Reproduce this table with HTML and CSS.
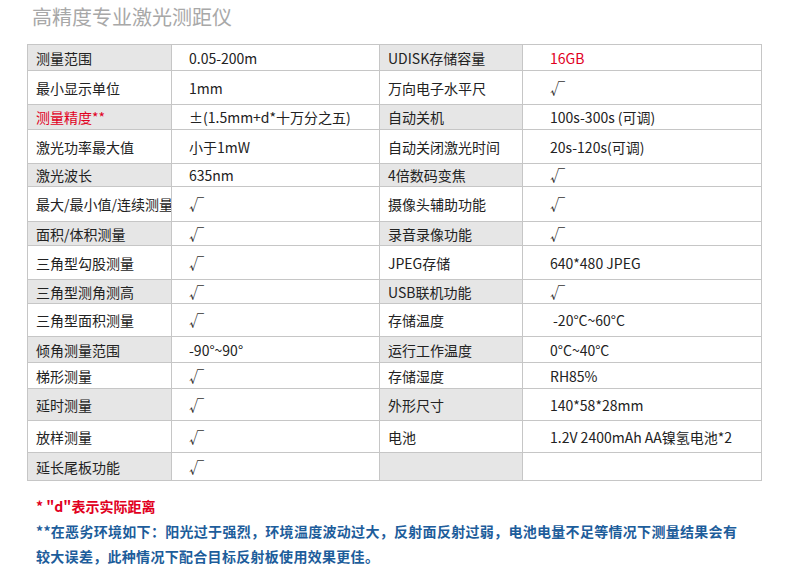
FILE: index.html
```html
<!DOCTYPE html>
<html lang="zh-CN">
<head>
<meta charset="utf-8">
<title>高精度专业激光测距仪</title>
<link rel="stylesheet" href="styles.css">
</head>
<body>
<h1 class="title">高精度专业激光测距仪</h1>
<div class="spec">
  <div class="c k g">测量范围</div><div class="c v">0.05-200m</div><div class="c k2 g">UDISK存储容量</div><div class="c v2 red">16GB</div>
  <div class="c k">最小显示单位</div><div class="c v">1mm</div><div class="c k2">万向电子水平尺</div><div class="c v2"><span class="ok">√</span></div>
  <div class="c k g red">测量精度**</div><div class="c v">±(1.5mm+d*十万分之五)</div><div class="c k2 g">自动关机</div><div class="c v2">100s-300s (可调)</div>
  <div class="c k">激光功率最大值</div><div class="c v">小于1mW</div><div class="c k2">自动关闭激光时间</div><div class="c v2">20s-120s(可调)</div>
  <div class="c k g">激光波长</div><div class="c v">635nm</div><div class="c k2 g">4倍数码变焦</div><div class="c v2"><span class="ok">√</span></div>
  <div class="c k">最大/最小值/连续测量</div><div class="c v"><span class="ok">√</span></div><div class="c k2">摄像头辅助功能</div><div class="c v2"><span class="ok">√</span></div>
  <div class="c k g">面积/体积测量</div><div class="c v"><span class="ok">√</span></div><div class="c k2 g">录音录像功能</div><div class="c v2"><span class="ok">√</span></div>
  <div class="c k">三角型勾股测量</div><div class="c v"><span class="ok">√</span></div><div class="c k2">JPEG存储</div><div class="c v2">640*480 JPEG</div>
  <div class="c k g">三角型测角测高</div><div class="c v"><span class="ok">√</span></div><div class="c k2 g">USB联机功能</div><div class="c v2"><span class="ok">√</span></div>
  <div class="c k">三角型面积测量</div><div class="c v"><span class="ok">√</span></div><div class="c k2">存储温度</div><div class="c v2 ind">-20°C~60°C</div>
  <div class="c k g">倾角测量范围</div><div class="c v">-90°~90°</div><div class="c k2 g">运行工作温度</div><div class="c v2">0°C~40°C</div>
  <div class="c k">梯形测量</div><div class="c v"><span class="ok">√</span></div><div class="c k2">存储湿度</div><div class="c v2">RH85%</div>
  <div class="c k g">延时测量</div><div class="c v"><span class="ok">√</span></div><div class="c k2 g">外形尺寸</div><div class="c v2">140*58*28mm</div>
  <div class="c k">放样测量</div><div class="c v"><span class="ok">√</span></div><div class="c k2">电池</div><div class="c v2">1.2V 2400mAh AA镍氢电池*2</div>
  <div class="c k g">延长尾板功能</div><div class="c v"><span class="ok">√</span></div><div class="c k2 g"></div><div class="c v2"></div>
</div>
<div class="notes">
  <p class="note-red">* "d"表示实际距离</p>
  <p class="note-blue">**在恶劣环境如下：阳光过于强烈，环境温度波动过大，反射面反射过弱，电池电量不足等情况下测量结果会有较大误差，此种情况下配合目标反射板使用效果更佳。</p>
</div>
</body>
</html>
```
FILE: styles.css
```css
html, body {
  margin: 0;
  padding: 0;
  background: #ffffff;
}
body {
  width: 790px;
  height: 575px;
  overflow: hidden;
  font-family: "Noto Sans CJK SC", "Noto Sans", sans-serif;
  color: #222222;
}
.title {
  margin: 0;
  padding: 5px 0 0 32px;
  height: 44px;
  box-sizing: border-box;
  font-size: 20px;
  line-height: 24px;
  font-weight: 400;
  color: #a8a8a8;
}
.spec {
  margin-left: 27px;
  width: 735px;
  box-sizing: border-box;
  display: grid;
  grid-template-columns: 143px 207px 142px 238px;
  grid-template-rows: 25px 33px 24px 33px 22px 34px 23px 33px 23px 32px 25px 25px 31px 31px 27px;
  gap: 1px;
  background: #c6c6c6;
  border: 1px solid #c6c6c6;
}
.c {
  background: #ffffff;
  display: flex;
  align-items: center;
  font-size: 14px;
  line-height: 16px;
  white-space: nowrap;
  overflow: hidden;
}
.c.g {
  background: #e6e6e6;
}
.k { padding-left: 8px; }
.v { padding-left: 17px; }
.k2 { padding-left: 8px; }
.v2 { padding-left: 27px; }
.v2.ind { padding-left: 30px; }
.red { color: #e1001e; }
.ok {
  font-size: 15px;
  color: #333333;
}
.notes {
  padding: 13px 0 0 36px;
  width: 712px;
}
.notes p {
  margin: 0;
  font-size: 14px;
  font-weight: 700;
  line-height: 25px;
}
.note-red {
  color: #e1001e;
}
.note-blue {
  color: #1d5d9b;
  letter-spacing: 0.3px;
}
```
